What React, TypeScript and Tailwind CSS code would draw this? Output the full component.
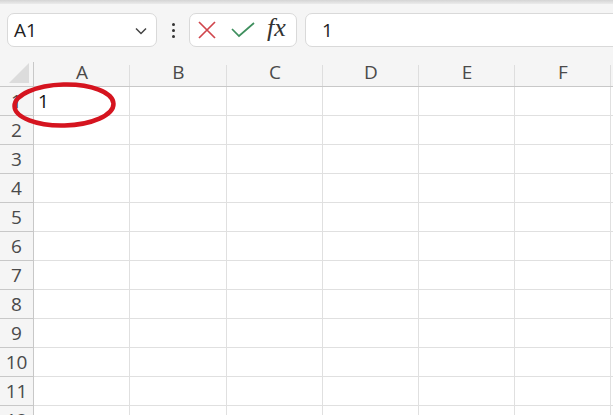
import React from "react";

const cols = ["A", "B", "C", "D", "E", "F", ""];
const rows = Array.from({ length: 12 }, (_, i) => i + 1);

export default function App() {
  return (
    <div
      className="relative w-[613px] h-[415px] overflow-hidden bg-white"
      style={{ fontFamily: '"Open Sans", "Noto Sans", sans-serif' }}
    >
      {/* top strip */}
      <div className="h-[4px] bg-gradient-to-b from-[#d4d4d4] to-[#ebebeb]" />

      {/* formula bar */}
      <div className="h-[58px] bg-[#f5f5f5] flex items-start pt-[9px]">
        <div className="ml-[7px] w-[150px] h-[34px] bg-white border border-[#d9d9d9] rounded-[7px] flex items-center pl-[6px] pr-[9px] justify-between shrink-0">
          <span className="text-[19px] text-[#222] leading-none">A1</span>
          <svg width="12" height="8" viewBox="0 0 12 8" className="mt-[1px]">
            <path d="M1 1.5 L6 6.5 L11 1.5" fill="none" stroke="#444" strokeWidth="1.5" />
          </svg>
        </div>
        <div className="w-[32px] h-[34px] flex flex-col items-center justify-center gap-[3px] shrink-0">
          <span className="w-[3px] h-[3px] rounded-full bg-[#333]" />
          <span className="w-[3px] h-[3px] rounded-full bg-[#333]" />
          <span className="w-[3px] h-[3px] rounded-full bg-[#333]" />
        </div>
        <div className="w-[108px] h-[34px] bg-white border border-[#d9d9d9] rounded-[7px] flex items-center shrink-0">
          <svg width="20" height="20" viewBox="0 0 20 20" className="ml-[7px]">
            <path d="M2 2 L18 18 M18 2 L2 18" stroke="#d0454c" strokeWidth="1.7" fill="none" />
          </svg>
          <svg width="24" height="18" viewBox="0 0 24 18" className="ml-[14px]">
            <path d="M1 8 L8 15 L23 2" stroke="#3f8f5e" strokeWidth="1.7" fill="none" />
          </svg>
          <span
            className="ml-[12px] text-[26px] italic font-medium text-[#333] leading-none -mt-[4px]"
            style={{ fontFamily: '"Liberation Serif", "DejaVu Serif", serif' }}
          >
            fx
          </span>
        </div>
        <div className="ml-[8px] w-[330px] h-[34px] bg-white border border-[#d9d9d9] rounded-[7px] flex items-center pl-[16px] shrink-0">
          <span className="text-[19px] text-[#222] leading-none">1</span>
        </div>
      </div>

      {/* grid */}
      <div className="grid grid-cols-[34px_96px_97px_96px_96px_96px_96px_96px] w-[807px]">
        {/* header row */}
        <div className="h-[25px] bg-[#f5f5f5] border-r border-b border-[#c8c8c8] relative">
          <svg width="22" height="22" viewBox="0 0 22 22" className="absolute right-[3px] bottom-[2px]">
            <path d="M21 1 L21 21 L1 21 Z" fill="#dcdcdc" />
          </svg>
        </div>
        {cols.map((c, i) => (
          <div
            key={i}
            className="h-[25px] bg-[#f5f5f5] border-b border-[#c8c8c8] flex items-end justify-center relative"
          >
            <span className="absolute right-0 top-[3px] bottom-0 w-px bg-[#dedede]" />
            <span className="text-[19px] text-[#4a4a4a] leading-none pb-[4px]">{c}</span>
          </div>
        ))}
        {rows.map((r) => (
          <React.Fragment key={r}>
            <div className="h-[29px] bg-[#f5f5f5] border-r border-b border-[#c8c8c8] flex items-center justify-center">
              <span className="text-[19px] text-[#4a4a4a] leading-none">{r}</span>
            </div>
            {cols.map((c, i) => (
              <div
                key={i}
                className="h-[29px] border-r border-b border-[#e0e0e0] flex items-center pl-[4px]"
              >
                {r === 1 && c === "A" ? (
                  <span className="text-[19px] text-[#111] leading-none">1</span>
                ) : null}
              </div>
            ))}
          </React.Fragment>
        ))}
      </div>

      {/* red ellipse annotation */}
      <svg
        width="106"
        height="48"
        viewBox="0 0 106 48"
        className="absolute left-[11px] top-[81px]"
      >
        <ellipse
          cx="53"
          cy="24"
          rx="49.5"
          ry="20.5"
          fill="none"
          stroke="#d5141f"
          strokeWidth="4.5"
          transform="rotate(-1.5 53 24)"
        />
      </svg>
    </div>
  );
}
